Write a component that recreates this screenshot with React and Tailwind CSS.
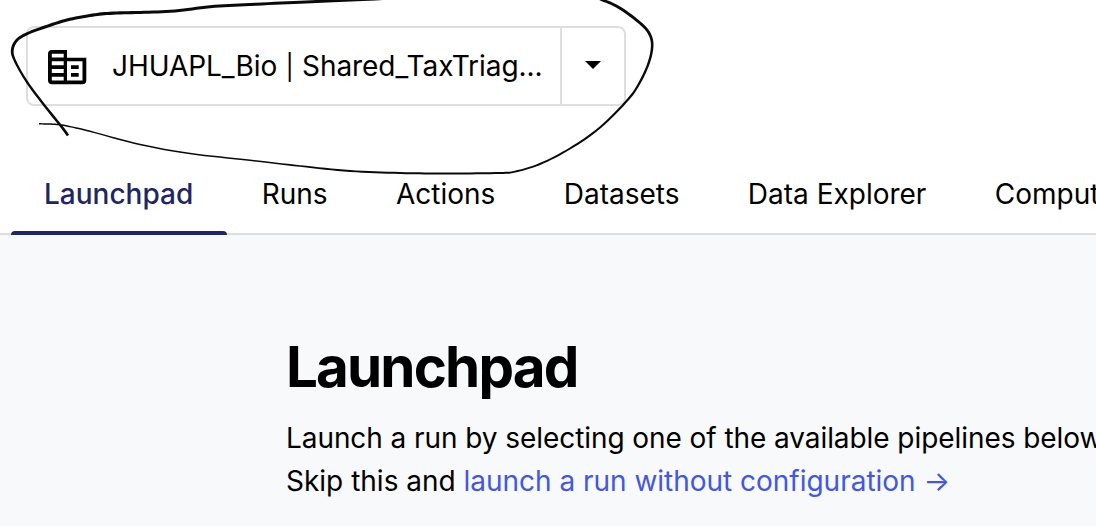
import React from "react";

// Freehand stroke samples: x, y, pen width
const LOOP = [
  [68, 135.5, 2.7], [61, 126, 2.7], [44.5, 105.5, 2.4], [27, 82, 2.3], [15, 61, 2.4], [12.3, 50, 2.9],
  [17, 40, 2.9], [28, 33.3, 2.9], [45, 27, 3.1], [67, 20, 3.1], [90, 15.5, 3.1], [110, 13.3, 3.2],
  [140, 12.4, 3], [175, 11, 3], [210, 6.7, 3], [250, 4.5, 3], [300, 2.2, 2.9], [345, 0.3, 2.8],
  [400, -2, 2.4], [500, -8, 2.4], [580, -6, 2.5], [604, 0.6, 2.8], [621, 8.8, 2.9], [640, 23, 2.9],
  [649, 33, 2.8], [652.2, 45, 2.6], [649, 62, 2.4], [640, 82, 2.3], [628, 99.5, 2.2], [600, 127.5, 2.1],
  [570, 148.5, 2], [540, 164, 1.9], [515, 171.6, 1.9], [500, 173, 2], [450, 173.5, 2],
  [400, 173, 2], [350, 171, 1.9], [300, 166, 1.7], [250, 160.3, 1.6], [190, 153.5, 1.5],
  [140, 144.5, 1.5], [90, 131.3, 1.5], [67, 126, 1.5], [55, 124.3, 1.6], [39, 123.8, 1.4],
];

function smooth(points, steps) {
  const out = [];
  for (let i = 0; i < points.length - 1; i++) {
    const a = points[Math.max(i - 1, 0)];
    const b = points[i];
    const c = points[i + 1];
    const d = points[Math.min(i + 2, points.length - 1)];
    for (let s = 0; s < steps; s++) {
      const t = s / steps;
      out.push(
        [0, 1, 2].map(
          (k) =>
            0.5 *
            (2 * b[k] +
              (c[k] - a[k]) * t +
              (2 * a[k] - 5 * b[k] + 4 * c[k] - d[k]) * t * t +
              (3 * b[k] - a[k] - 3 * c[k] + d[k]) * t * t * t)
        )
      );
    }
  }
  out.push(points[points.length - 1]);
  return out;
}

function outline(points) {
  const left = [];
  const right = [];
  points.forEach(([x, y, w], i) => {
    const p = points[Math.max(i - 1, 0)];
    const n = points[Math.min(i + 1, points.length - 1)];
    const dx = n[0] - p[0];
    const dy = n[1] - p[1];
    const len = Math.hypot(dx, dy) || 1;
    const ox = (-dy / len) * (w / 2);
    const oy = (dx / len) * (w / 2);
    left.push(`${(x + ox).toFixed(2)} ${(y + oy).toFixed(2)}`);
    right.unshift(`${(x - ox).toFixed(2)} ${(y - oy).toFixed(2)}`);
  });
  return `M${left.concat(right).join("L")}Z`;
}

const LOOP_PATH = outline(smooth(LOOP, 8));

function PenLoop() {
  return (
    <svg className="pointer-events-none absolute left-0 top-0" width="700" height="180" viewBox="0 0 700 180">
      <path d={LOOP_PATH} fill="#0a0a0a" />
    </svg>
  );
}

function OrgIcon() {
  return (
    <svg className="mt-[2.4px] shrink-0" width="39" height="35" viewBox="0 0 39 35" fill="#000">
      <path
        fillRule="evenodd"
        d="M4 0H19V7.7H38.3V30.3Q38.3 34.3 34.3 34.3H4Q0 34.3 0 30.3V4Q0 0 4 0ZM3.8 3.7V7.5H15.7V3.7ZM3.8 11.3V15.2H15.7V11.3ZM3.8 19V22.9H15.7V19ZM3.8 26.7V30.5H15.7V26.7ZM19 11.3V30.5H34.5V11.3Z"
      />
      <path d="M23 15.2H30.7V19H23ZM23 22.9H30.7V26.7H23Z" />
    </svg>
  );
}

function WorkspaceSelect() {
  return (
    <div className="ml-[26px] flex h-[80px] w-[600px] rounded-lg border-2 border-[#dedede] bg-white">
      <div className="flex min-w-0 flex-1 items-center pl-5">
        <OrgIcon />
        <span className="ml-[25px] whitespace-nowrap text-[28px] leading-10 tracking-[-0.06px]">
          JHUAPL_Bio <span className="mx-[0.5px] text-[25px] leading-none">|</span> Shared_TaxTriag...
        </span>
      </div>
      <button className="flex w-16 items-center justify-center border-l-2 border-[#dedede]" aria-label="Open workspace menu">
        <svg className="-mt-0.5" width="16" height="8" viewBox="0 0 16 8">
          <path d="M0 0H16L8 8Z" />
        </svg>
      </button>
    </div>
  );
}

const TABS = ["Launchpad", "Runs", "Actions", "Datasets", "Data Explorer", "Compute Environments"];

function Tabs() {
  return (
    <nav className="flex h-[82px] border-b-2 border-[#dedede] pl-[11px] text-[28px] leading-10">
      {TABS.map((label, i) => (
        <a
          key={label}
          className={
            i === 0
              ? "-mb-0.5 mr-[0.5px] flex w-[216px] shrink-0 flex-col whitespace-nowrap font-medium text-[#1f2566]"
              : "-mb-0.5 flex shrink-0 flex-col whitespace-nowrap"
          }
        >
          <span className={i === 0 ? "pl-[33px] pt-[21px]" : "px-[34.2px] pt-[21px]"}>{label}</span>
          {i === 0 && <span className="mt-auto h-1 rounded-t-sm bg-[#1f2566]" />}
        </a>
      ))}
    </nav>
  );
}

export default function App() {
  return (
    <div className="relative flex h-[526px] w-[1096px] flex-col overflow-hidden bg-white font-['Inter',sans-serif] text-black">
      <header className="flex h-[235px] shrink-0 flex-col justify-between pt-[26px]">
        <WorkspaceSelect />
        <Tabs />
      </header>
      <main className="flex-1 bg-[#f8f9fb] pl-[286px] pt-[96px]">
        <h1 className="whitespace-nowrap text-[56.5px] font-bold leading-[72px] tracking-[-1.85px]">Launchpad</h1>
        <p className="mt-[14px] whitespace-nowrap text-[28px] leading-[43px]">
          <span className="tracking-[-0.07px]">Launch a run by selecting one of the available pipelines below.</span>
          <br />
          Skip this and <a className="tracking-[-0.02px] text-[#4256e7]">launch a run without configuration →</a>
        </p>
      </main>
      <PenLoop />
    </div>
  );
}
